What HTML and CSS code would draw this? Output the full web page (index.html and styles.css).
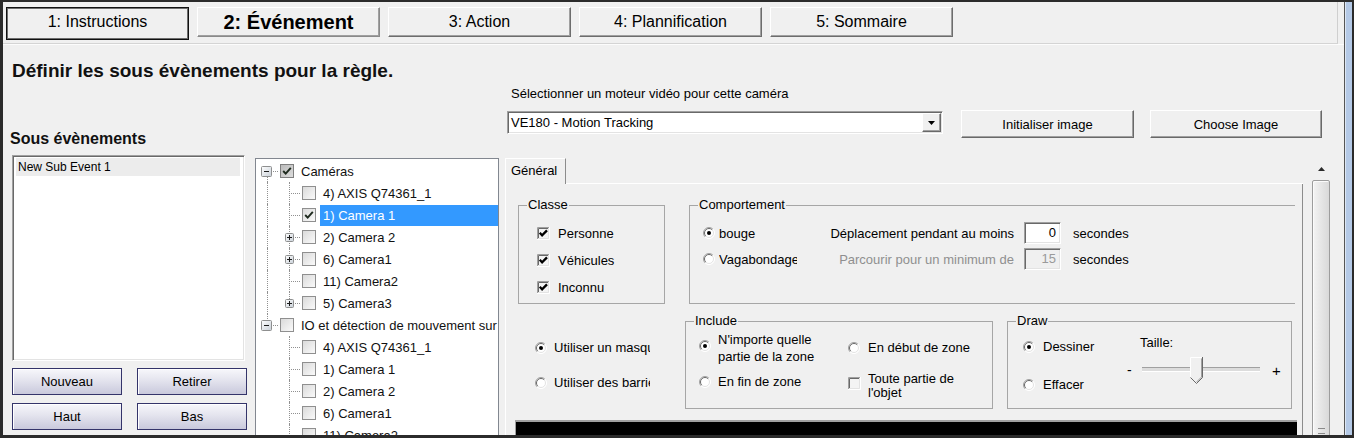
FILE: index.html
```html
<!DOCTYPE html>
<html lang="fr">
<head>
<meta charset="utf-8">
<title>Règle - Événement</title>
<link rel="stylesheet" href="styles.css">
</head>
<body>
<svg class="defs" width="0" height="0" aria-hidden="true">
  <defs>
    <linearGradient id="g-tcb" x1="0" y1="0" x2="1" y2="1">
      <stop offset="0" stop-color="#d9d9d9"/>
      <stop offset="1" stop-color="#fbfbfb"/>
    </linearGradient>
    <linearGradient id="g-tcbp" x1="0" y1="0" x2="1" y2="1">
      <stop offset="0" stop-color="#b9b9b9"/>
      <stop offset="1" stop-color="#dedede"/>
    </linearGradient>
    <linearGradient id="g-exp" x1="0" y1="0" x2="1" y2="1">
      <stop offset="0" stop-color="#ffffff"/>
      <stop offset="1" stop-color="#c9d0d8"/>
    </linearGradient>
    <symbol id="rad" viewBox="0 0 12 12">
      <circle cx="6" cy="6" r="5.5" fill="#fff"/>
      <path d="M2.1 9.9A5.5 5.5 0 0 1 9.9 2.1" fill="none" stroke="#a0a0a0"/>
      <path d="M9.9 2.1A5.5 5.5 0 0 1 2.1 9.9" fill="none" stroke="#ffffff"/>
      <path d="M2.8 9.2A4.5 4.5 0 0 1 9.2 2.8" fill="none" stroke="#696969"/>
      <path d="M9.2 2.8A4.5 4.5 0 0 1 2.8 9.2" fill="none" stroke="#e3e3e3"/>
    </symbol>
    <symbol id="rad-on" viewBox="0 0 12 12">
      <use href="#rad"/>
      <circle cx="6" cy="6" r="2" fill="#000"/>
    </symbol>
    <symbol id="cb" viewBox="0 0 13 13">
      <rect x="0" y="0" width="13" height="13" fill="#f4f4f4"/>
      <path d="M0.5 12V0.5H12" fill="none" stroke="#a0a0a0"/>
      <path d="M1.5 11V1.5H11" fill="none" stroke="#696969"/>
      <path d="M0 12.5H12.5V0" fill="none" stroke="#ffffff"/>
      <path d="M1 11.5H11.5V1" fill="none" stroke="#e3e3e3"/>
    </symbol>
    <symbol id="cb-on" viewBox="0 0 13 13">
      <use href="#cb"/>
      <path d="M2.8 5.8L5.1 8.4L10 3.4" fill="none" stroke="#000" stroke-width="2.3"/>
    </symbol>
    <symbol id="tcb-off" viewBox="0 0 14 14">
      <rect x="0.5" y="0.5" width="13" height="13" fill="url(#g-tcb)" stroke="#8f8f8f"/>
    </symbol>
    <symbol id="tcb-on" viewBox="0 0 14 14">
      <rect x="0.5" y="0.5" width="13" height="13" fill="url(#g-tcb)" stroke="#8f8f8f"/>
      <path d="M3.2 7L5.7 9.6L10.8 3.8" fill="none" stroke="#1e2a1e" stroke-width="1.9"/>
    </symbol>
    <symbol id="tcb-part" viewBox="0 0 14 14">
      <rect x="0.5" y="0.5" width="13" height="13" fill="url(#g-tcbp)" stroke="#7f7f7f"/>
      <path d="M3.2 7L5.7 9.6L10.8 3.8" fill="none" stroke="#1e2a1e" stroke-width="1.9"/>
    </symbol>
    <symbol id="exp-minus" viewBox="0 0 11 11">
      <rect x="0.5" y="0.5" width="10" height="10" rx="1" fill="url(#g-exp)" stroke="#8e8f8f"/>
      <path d="M3 5.5H8" stroke="#1b1b1b"/>
    </symbol>
    <symbol id="exp-plus" viewBox="0 0 9 9">
      <rect x="0.5" y="0.5" width="8" height="8" rx="1" fill="url(#g-exp)" stroke="#8e8f8f"/>
      <path d="M2 4.5H7M4.5 2V7" stroke="#1b1b1b"/>
    </symbol>
  </defs>
</svg>

<div class="window">
  <div class="client">
    <div class="tabbar">
      <div class="wtab focus">1: Instructions</div>
      <div class="wtab current">2: Événement</div>
      <div class="wtab">3: Action</div>
      <div class="wtab">4: Plannification</div>
      <div class="wtab">5: Sommaire</div>
    </div>

    <div class="page">
      <div class="heading">Définir les sous évènements pour la règle.</div>

      <div class="main">
        <div class="leftcol">
          <div class="subtitle">Sous évènements</div>
          <div class="listbox">
            <div class="listitem">New Sub Event 1</div>
          </div>
          <div class="btnrow">
            <button class="navbtn">Nouveau</button>
            <button class="navbtn">Retirer</button>
          </div>
          <div class="btnrow second">
            <button class="navbtn">Haut</button>
            <button class="navbtn">Bas</button>
          </div>
        </div>

        <div class="tree">
          <div class="trow">
            <span class="tc tc-vb tc-h"><svg class="exp11"><use href="#exp-minus"/></svg></span>
            <svg class="tcb root"><use href="#tcb-part"/></svg>
            <span class="tl">Caméras</span>
          </div>
          <div class="trow">
            <span class="tc tc-v"></span>
            <span class="tc tc-v tc-h"></span>
            <svg class="tcb"><use href="#tcb-off"/></svg>
            <span class="tl">4) AXIS Q74361_1</span>
          </div>
          <div class="trow">
            <span class="tc tc-v"></span>
            <span class="tc tc-v tc-h"></span>
            <svg class="tcb"><use href="#tcb-on"/></svg>
            <span class="tl selected">1) Camera 1</span>
          </div>
          <div class="trow">
            <span class="tc tc-v"></span>
            <span class="tc tc-v tc-h"><svg class="exp9"><use href="#exp-plus"/></svg></span>
            <svg class="tcb"><use href="#tcb-off"/></svg>
            <span class="tl">2) Camera 2</span>
          </div>
          <div class="trow">
            <span class="tc tc-v"></span>
            <span class="tc tc-v tc-h"><svg class="exp9"><use href="#exp-plus"/></svg></span>
            <svg class="tcb"><use href="#tcb-off"/></svg>
            <span class="tl">6) Camera1</span>
          </div>
          <div class="trow">
            <span class="tc tc-v"></span>
            <span class="tc tc-v tc-h"></span>
            <svg class="tcb"><use href="#tcb-off"/></svg>
            <span class="tl">11) Camera2</span>
          </div>
          <div class="trow">
            <span class="tc tc-v"></span>
            <span class="tc tc-vt tc-h"><svg class="exp9"><use href="#exp-plus"/></svg></span>
            <svg class="tcb"><use href="#tcb-off"/></svg>
            <span class="tl">5) Camera3</span>
          </div>
          <div class="trow">
            <span class="tc tc-vt tc-h"><svg class="exp11"><use href="#exp-minus"/></svg></span>
            <svg class="tcb root"><use href="#tcb-off"/></svg>
            <span class="tl">IO et détection de mouvement sur les caméras</span>
          </div>
          <div class="trow">
            <span class="tc"></span>
            <span class="tc tc-v tc-h"></span>
            <svg class="tcb"><use href="#tcb-off"/></svg>
            <span class="tl">4) AXIS Q74361_1</span>
          </div>
          <div class="trow">
            <span class="tc"></span>
            <span class="tc tc-v tc-h"></span>
            <svg class="tcb"><use href="#tcb-off"/></svg>
            <span class="tl">1) Camera 1</span>
          </div>
          <div class="trow">
            <span class="tc"></span>
            <span class="tc tc-v tc-h"></span>
            <svg class="tcb"><use href="#tcb-off"/></svg>
            <span class="tl">2) Camera 2</span>
          </div>
          <div class="trow">
            <span class="tc"></span>
            <span class="tc tc-v tc-h"></span>
            <svg class="tcb"><use href="#tcb-off"/></svg>
            <span class="tl">6) Camera1</span>
          </div>
          <div class="trow">
            <span class="tc"></span>
            <span class="tc tc-v tc-h"></span>
            <svg class="tcb"><use href="#tcb-off"/></svg>
            <span class="tl">11) Camera2</span>
          </div>
        </div>

        <div class="rightcol">
          <div class="engine-label">Sélectionner un moteur vidéo pour cette caméra</div>
          <div class="engine-row">
            <div class="combo">
              <span class="combo-text">VE180 - Motion Tracking</span>
              <span class="combo-btn"><svg width="7" height="4" viewBox="0 0 7 4"><path d="M0 0H7L3.5 4Z" fill="#000"/></svg></span>
            </div>
            <button class="winbtn btn-init">Initialiser image</button>
            <button class="winbtn btn-choose">Choose Image</button>
          </div>

          <div class="tabzone">
            <div class="tabctl">
              <div class="tabstrip">
                <div class="ptab">Général</div>
                <div class="strip-fill"></div>
              </div>
              <div class="tabpage">
                <div class="grp-row1">
                  <fieldset class="grp grp-classe">
                    <legend>Classe</legend>
                    <div class="classe-body">
                      <div class="chk-row"><svg class="cbox"><use href="#cb-on"/></svg><span>Personne</span></div>
                      <div class="chk-row"><svg class="cbox"><use href="#cb-on"/></svg><span>Véhicules</span></div>
                      <div class="chk-row"><svg class="cbox"><use href="#cb-on"/></svg><span>Inconnu</span></div>
                    </div>
                  </fieldset>
                  <fieldset class="grp grp-comport">
                    <legend>Comportement</legend>
                    <div class="comport-body">
                      <div class="cmp-radios">
                        <div class="cmp-rrow"><svg class="radio"><use href="#rad-on"/></svg><span class="clip-label">bouge</span></div>
                        <div class="cmp-rrow"><svg class="radio"><use href="#rad"/></svg><span class="clip-label">Vagabondage</span></div>
                      </div>
                      <div class="cmp-fields">
                        <div class="cmp-frow">
                          <span class="cmp-flabel">Déplacement pendant au moins</span>
                          <span class="num">0</span>
                          <span class="unit">secondes</span>
                        </div>
                        <div class="cmp-frow">
                          <span class="cmp-flabel disabled">Parcourir pour un minimum de</span>
                          <span class="num off">15</span>
                          <span class="unit">secondes</span>
                        </div>
                      </div>
                    </div>
                  </fieldset>
                </div>

                <div class="grp-row2">
                  <div class="radcol">
                    <div class="rc-row"><svg class="radio"><use href="#rad-on"/></svg><span class="rc-label">Utiliser un masque</span></div>
                    <div class="rc-row"><svg class="radio"><use href="#rad"/></svg><span class="rc-label">Utiliser des barrières</span></div>
                  </div>
                  <fieldset class="grp grp-include">
                    <legend>Include</legend>
                    <div class="include-body">
                      <div class="inc-cell inc-a"><svg class="radio"><use href="#rad-on"/></svg><span>N'importe quelle<br>partie de la zone</span></div>
                      <div class="inc-cell inc-b"><svg class="radio"><use href="#rad"/></svg><span>En début de zone</span></div>
                      <div class="inc-cell inc-c"><svg class="radio"><use href="#rad"/></svg><span>En fin de zone</span></div>
                      <div class="inc-cell inc-d"><svg class="cbox"><use href="#cb"/></svg><span>Toute partie de<br>l'objet</span></div>
                    </div>
                  </fieldset>
                  <fieldset class="grp grp-draw">
                    <legend>Draw</legend>
                    <div class="draw-body">
                      <div class="draw-radios">
                        <div class="dr-row"><svg class="radio"><use href="#rad-on"/></svg><span>Dessiner</span></div>
                        <div class="dr-row second"><svg class="radio"><use href="#rad"/></svg><span>Effacer</span></div>
                      </div>
                      <div class="draw-size">
                        <div class="size-label">Taille:</div>
                        <div class="slider">
                          <span class="sl-minus">-</span>
                          <span class="sl-track">
                            <svg class="sl-thumb" width="13" height="27" viewBox="0 0 13 27">
                              <path d="M0.5 0.5H12.5V20.5L6.5 26.5L0.5 20.5Z" fill="#f0f0f0"/>
                              <path d="M0.5 20.5V0.5H12" fill="none" stroke="#ffffff"/>
                              <path d="M12.5 0V20.5L6.5 26.5L0.5 20.5" fill="none" stroke="#696969"/>
                              <path d="M11.5 1.5V20L6.5 25" fill="none" stroke="#a0a0a0"/>
                            </svg>
                          </span>
                          <span class="sl-plus">+</span>
                        </div>
                      </div>
                    </div>
                  </fieldset>
                </div>

                <div class="videobox"></div>
              </div>
            </div>
            <div class="vscroll">
              <div class="vs-up"><svg width="7" height="4" viewBox="0 0 7 4"><path d="M0 4H7L3.5 0Z" fill="#2a2a2a"/></svg></div>
              <div class="vs-thumb"><div class="vs-grip"></div></div>
            </div>
          </div>
        </div>
      </div>
    </div>
  </div>
  <div class="frame-right"></div>
</div>
</body>
</html>
```

FILE: styles.css
```css
* { box-sizing: border-box; }
html, body { margin: 0; padding: 0; }
body {
  background: #2b2b2b;
  font-family: "Liberation Sans", Arial, sans-serif;
  font-size: 13px;
  color: #000;
}
button { font-family: inherit; font-size: 13px; color: #000; padding: 0; cursor: default; }
.defs { position: absolute; width: 0; height: 0; overflow: hidden; }

/* window frame */
.window {
  width: 1354px;
  height: 438px;
  display: flex;
  border-top: 2px solid #2b2b2b;
  border-left: 3px solid #2b2b2b;
  border-bottom: 3px solid #2b2b2b;
  border-right: 2px solid #2b2b2b;
  overflow: hidden;
}
.client {
  flex: 1;
  min-width: 0;
  background: #f0f0f0;
  overflow: hidden;
  display: flex;
  flex-direction: column;
}
.frame-right {
  width: 8px;
  flex: none;
  background: #b4c9e6;
  border-left: 1px solid #555;
  box-shadow: inset 1px 0 #dde7f4;
}

/* wizard tabs */
.tabbar {
  height: 42px;
  flex: none;
  display: flex;
  align-items: flex-start;
  gap: 8px;
  padding: 5px 0 0 3px;
  border-bottom: 1px solid #d4d4d4;
  margin-right: 6px;
  border-right: 1px solid #cfcfcf;
}
.wtab {
  width: 183px;
  height: 30px;
  line-height: 28px;
  text-align: center;
  font-size: 16px;
  background: #f0f0f0;
  border: 1px solid;
  border-color: #ffffff #6d6d6d #6d6d6d #ffffff;
  box-shadow: inset -1px -1px #a0a0a0;
}
.wtab.focus {
  height: 33px;
  border-color: #111;
  box-shadow: inset 1px 1px #6d6d6d, inset -1px -1px #6d6d6d;
}
.wtab.current {
  font-weight: bold;
  font-size: 20px;
  border-color: #ffffff #8a8a8a #8a8a8a #ffffff;
}

.page {
  flex: 1;
  min-height: 0;
  border-top: 1px solid #fcfcfc;
}
.heading {
  padding: 15px 0 0 9px;
  line-height: 22px;
  font-size: 19px;
  font-weight: bold;
  color: #111;
}
.main {
  display: flex;
  align-items: flex-start;
}

/* left column */
.leftcol {
  width: 237px;
  flex: none;
  margin-left: 7px;
}
.subtitle {
  margin-top: 47px;
  line-height: 20px;
  font-size: 16px;
  font-weight: bold;
  color: #111;
}
.listbox {
  margin: 6px 0 0 2px;
  width: 233px;
  height: 206px;
  background: #fff;
  border: 1px solid;
  border-color: #a0a0a0 #ffffff #ffffff #a0a0a0;
  box-shadow: inset 1px 1px #696969, inset -1px -1px #e3e3e3;
  padding: 2px 4px 0 3px;
}
.listitem {
  height: 18px;
  line-height: 18px;
  padding-left: 2px;
  background: #ececec;
  font-size: 12px;
}
.btnrow {
  display: flex;
  gap: 15px;
  margin: 7px 0 0 2px;
}
.btnrow.second { margin-top: 8px; }
.navbtn {
  width: 110px;
  height: 27px;
  border: 1px solid #34346a;
  background: linear-gradient(#f7f7fb, #e4e4ee 45%, #c9c9dc);
  box-shadow: inset 1px 1px #ffffff;
}

/* tree */
.tree {
  width: 244px;
  height: 300px;
  flex: none;
  margin: 76px 0 0 8px;
  background: #fff;
  border: 1px solid #828790;
  padding-top: 1px;
  overflow: hidden;
}
.trow {
  display: flex;
  align-items: center;
  height: 22px;
}
.tc {
  position: relative;
  width: 22px;
  height: 22px;
  flex: none;
}
.tc-v::before,
.tc-vt::before,
.tc-vb::before {
  content: "";
  position: absolute;
  left: 11px;
  border-left: 1px dotted #909090;
}
.tc-v::before { top: 0; height: 22px; }
.tc-vt::before { top: 0; height: 11px; }
.tc-vb::before { top: 11px; height: 11px; }
.tc-h::after {
  content: "";
  position: absolute;
  left: 11px;
  right: 0;
  top: 11px;
  border-top: 1px dotted #909090;
}
.exp11 { position: absolute; z-index: 1; left: 5px; top: 6px; width: 11px; height: 11px; }
.exp9 { position: absolute; z-index: 1; left: 7px; top: 7px; width: 9px; height: 9px; }
.tcb { width: 14px; height: 14px; flex: none; margin-left: 2px; }
.tl {
  flex: 1;
  min-width: 0;
  margin-left: 4px;
  padding: 0 3px;
  line-height: 21px;
  height: 21px;
  margin-top: 1px;
  white-space: nowrap;
  overflow: hidden;
  font-size: 13px;
  color: #111;
}
.tl.selected { background: #3399ff; color: #fff; }

/* right column */
.rightcol {
  width: 839px;
  flex: none;
  margin-left: 6px;
}
.engine-label {
  margin-top: 5px;
  padding-left: 6px;
  line-height: 14px;
  font-size: 13px;
}
.engine-row {
  display: flex;
  align-items: flex-start;
  margin-top: 9px;
}
.combo {
  margin: 1px 0 0 2px;
  width: 436px;
  height: 23px;
  background: #fff;
  border: 1px solid;
  border-color: #a0a0a0 #ffffff #ffffff #a0a0a0;
  box-shadow: inset 1px 1px #696969, inset -1px -1px #e3e3e3;
  display: flex;
  align-items: center;
}
.combo-text { flex: 1; padding-left: 3px; }
.combo-btn {
  width: 19px;
  height: 19px;
  margin-right: 1px;
  background: #f0f0f0;
  border: 1px solid;
  border-color: #ffffff #696969 #696969 #ffffff;
  box-shadow: inset -1px -1px #a0a0a0;
  display: flex;
  align-items: center;
  justify-content: center;
}
.winbtn {
  height: 28px;
  background: #f0f0f0;
  border: 1px solid;
  border-color: #ffffff #696969 #696969 #ffffff;
  box-shadow: inset -1px -1px #a0a0a0;
}
.btn-init { margin-left: 18px; width: 173px; }
.btn-choose { margin-left: 16px; width: 172px; }

.tabzone {
  display: flex;
  align-items: flex-start;
  margin-top: 20px;
}
.tabctl { width: 798px; flex: none; }
.tabstrip { display: flex; height: 26px; }
.ptab {
  width: 61px;
  height: 26px;
  line-height: 24px;
  padding-left: 5px;
  border-top: 1px solid #fff;
  border-left: 1px solid #fff;
  border-right: 1px solid #8c8c8c;
}
.strip-fill { flex: 1; border-bottom: 1px solid #fff; }
.tabpage {
  height: 260px;
  border-left: 1px solid #fff;
  border-right: 1px solid #8c8c8c;
  padding: 14px 0 0 12px;
  overflow: hidden;
}

.grp {
  margin: 0;
  padding: 0;
  min-width: 0;
  border: 1px solid #a6a6a6;
}
.grp legend {
  margin-left: 8px;
  padding: 0 1px;
  line-height: 14px;
  font-size: 13px;
}
.grp-row1 { display: flex; align-items: flex-start; }
.grp-classe { width: 147px; height: 106px; }
.grp-comport { width: 606px; height: 106px; margin-left: 24px; border-right: none; }

.classe-body { padding: 8px 0 0 18px; }
.chk-row { display: flex; align-items: center; height: 27px; }
.cbox { width: 13px; height: 13px; flex: none; }
.chk-row .cbox { margin-right: 8px; }
.radio { width: 12px; height: 12px; flex: none; }

.comport-body { display: flex; padding: 8px 0 0 13px; }
.cmp-radios { width: 100px; flex: none; }
.cmp-rrow { display: flex; align-items: center; height: 26px; }
.clip-label { margin-left: 4px; width: 78px; overflow: hidden; white-space: nowrap; }
.cmp-fields { flex: none; }
.cmp-frow { display: flex; align-items: center; height: 26px; }
.cmp-flabel { width: 211px; text-align: right; }
.cmp-flabel.disabled { color: #8f8f8f; }
.num {
  margin-left: 10px;
  width: 37px;
  height: 22px;
  line-height: 20px;
  background: #fff;
  border: 1px solid;
  border-color: #a0a0a0 #ffffff #ffffff #a0a0a0;
  box-shadow: inset 1px 1px #696969, inset -1px -1px #e3e3e3;
  text-align: right;
  padding-right: 4px;
}
.num.off { background: #f0f0f0; color: #9a9a9a; }
.unit { margin-left: 12px; }

.grp-row2 { display: flex; align-items: flex-start; margin-top: 10px; }
.radcol { width: 150px; flex: none; margin-left: 17px; padding-top: 16px; }
.rc-row { display: flex; align-items: center; height: 35px; }
.rc-label { margin-left: 7px; width: 96px; overflow: hidden; white-space: nowrap; }

.grp-include { width: 308px; height: 95px; }
.include-body {
  display: grid;
  grid-template-columns: 149px 1fr;
  grid-template-rows: 34px auto;
  align-items: start;
  padding: 3px 0 0 13px;
}
.inc-cell { display: flex; align-items: flex-start; }
.inc-a { line-height: 17px; }
.inc-a .radio { margin-top: 9px; margin-right: 7px; }
.inc-b { margin-top: 8px; line-height: 17px; align-items: center; }
.inc-b .radio { margin-right: 8px; }
.inc-c { margin-top: 8px; line-height: 17px; align-items: center; }
.inc-c .radio { margin-right: 7px; }
.inc-d { margin-top: 7px; line-height: 14px; }
.inc-d .cbox { margin-top: 5px; margin-right: 7px; }

.grp-draw { width: 285px; height: 95px; margin-left: 14px; }
.draw-body { display: flex; padding-left: 15px; }
.draw-radios { width: 104px; flex: none; padding-top: 10px; }
.dr-row { display: flex; align-items: center; line-height: 17px; }
.dr-row.second { margin-top: 21px; }
.dr-row .radio { margin-right: 8px; }
.draw-size { flex: none; }
.size-label { margin-top: 7px; padding-left: 13px; line-height: 16px; }
.slider { display: flex; align-items: center; height: 26px; margin-top: 6px; }
.sl-minus { width: 5px; font-size: 14px; }
.sl-track {
  position: relative;
  width: 118px;
  height: 26px;
  margin-left: 10px;
}
.sl-track::before {
  content: "";
  position: absolute;
  left: 0;
  right: 0;
  top: 10px;
  height: 3px;
  border-top: 1px solid #a0a0a0;
  border-bottom: 1px solid #fff;
  background: #dcdcdc;
}
.sl-thumb { position: absolute; left: 48px; top: 0; }
.sl-plus { margin-left: 12px; font-size: 15px; }

.videobox {
  margin: 11px 0 0 -3px;
  width: 782px;
  height: 30px;
  background: #000;
  border-top: 2px solid #a0a0a0;
  border-left: 1px solid #a0a0a0;
}

/* vertical scrollbar */
.vscroll {
  width: 18px;
  flex: none;
  margin-left: 9px;
  height: 290px;
  display: flex;
  flex-direction: column;
}
.vs-up {
  height: 21px;
  display: flex;
  align-items: center;
  justify-content: center;
}
.vs-thumb {
  margin-top: 1px;
  height: 268px;
  border: 1px solid #9d9d9d;
  border-radius: 2px;
  background: linear-gradient(to right, #f4f4f4, #e6e6e6 50%, #d9d9d9);
  box-shadow: inset 1px 1px #fbfbfb;
}
.vs-grip {
  margin: 247px auto 0;
  width: 7px;
  height: 6px;
  border-top: 1px solid #8a8a8a;
  border-bottom: 1px solid #8a8a8a;
}
```
